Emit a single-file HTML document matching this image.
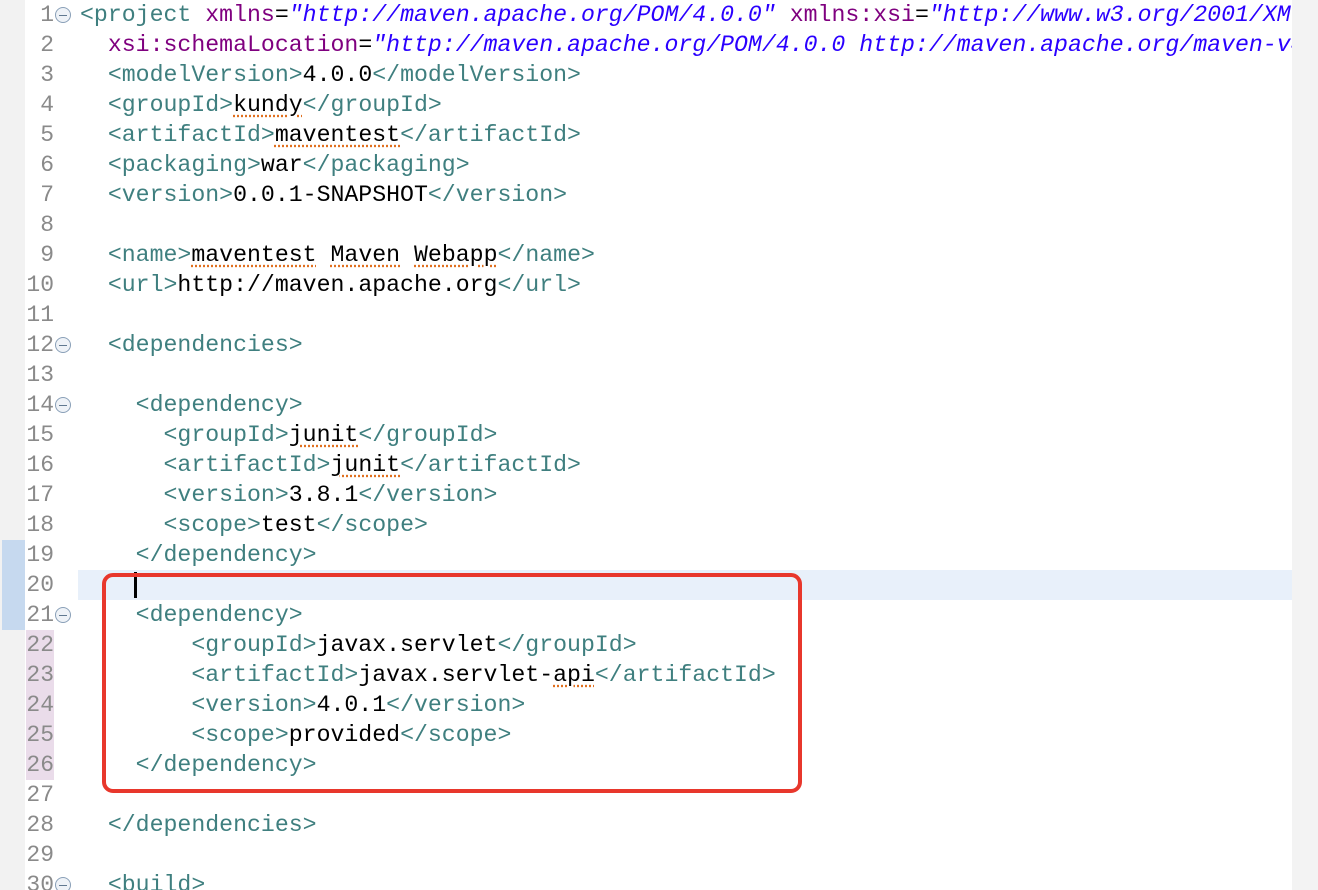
<!DOCTYPE html>
<html><head><meta charset="utf-8"><style>
html,body{margin:0;padding:0;background:#fff;width:1318px;height:890px;overflow:hidden;position:relative;font-family:"Liberation Mono",monospace;}
.ls{position:absolute;left:0;top:0;width:25px;height:890px;background:#f2f2f2;}
.gut{position:absolute;left:25px;top:0;width:48px;height:890px;background:#fff;}
.sb{position:absolute;left:1292px;top:0;width:26px;height:890px;background:#f3f3f3;}
.blue{position:absolute;left:2px;top:540px;width:23px;height:90px;background:#c6d9ef;}
.purp{position:absolute;left:26px;top:630px;width:28px;height:150px;background:#eadcea;}
.cur{position:absolute;left:78px;top:570px;width:1214px;height:30px;background:#e8f0fa;}
.nums{position:absolute;left:18px;top:0;width:36px;text-align:right;font-size:23px;line-height:30px;color:#8a8a8a;}
.code{position:absolute;left:80px;top:0;font-size:23.2px;line-height:30px;white-space:pre;color:#000;width:1212px;overflow:hidden;}
.t{color:#3f7f7f}.a{color:#7f007f}.s{color:#2a00ff;font-style:italic}
.u{text-decoration:underline dotted #e07020;text-underline-offset:4px}
.fold{position:absolute;left:55px;width:16px;height:16px;border-radius:50%;border:1px solid #8aa0b8;background:#eef2f7;box-sizing:border-box;}
.fold::after{content:"";position:absolute;left:3px;top:6.5px;width:8px;height:1.5px;background:#607890;}
.box{position:absolute;left:102px;top:573px;width:700px;height:220px;border:4px solid #e8372c;border-radius:11px;box-sizing:border-box;}
.caret{position:absolute;left:134px;top:572px;width:3px;height:26px;background:#000;}
</style></head><body>
<div class="ls"></div><div class="blue"></div>
<div class="gut"></div><div class="purp"></div>
<div class="sb"></div>
<div class="cur"></div>
<div class="nums">1<br>2<br>3<br>4<br>5<br>6<br>7<br>8<br>9<br>10<br>11<br>12<br>13<br>14<br>15<br>16<br>17<br>18<br>19<br>20<br>21<br>22<br>23<br>24<br>25<br>26<br>27<br>28<br>29<br>30</div>
<div class="fold" style="top:7px"></div>
<div class="fold" style="top:337px"></div>
<div class="fold" style="top:397px"></div>
<div class="fold" style="top:607px"></div>
<div class="fold" style="top:877px"></div>
<div class="code"><span class="t">&lt;project</span> <span class="a">xmlns</span>=<span class="s">"http://maven.apache.org/POM/4.0.0"</span> <span class="a">xmlns:xsi</span>=<span class="s">"http://www.w3.org/2001/XMLSchema-instance"</span>
  <span class="a">xsi:schemaLocation</span>=<span class="s">"http://maven.apache.org/POM/4.0.0 http://maven.apache.org/maven-v4_0_0.xsd"</span><span class="t">&gt;</span>
  <span class="t">&lt;modelVersion&gt;</span>4.0.0<span class="t">&lt;/modelVersion&gt;</span>
  <span class="t">&lt;groupId&gt;</span><span class="u">kundy</span><span class="t">&lt;/groupId&gt;</span>
  <span class="t">&lt;artifactId&gt;</span><span class="u">maventest</span><span class="t">&lt;/artifactId&gt;</span>
  <span class="t">&lt;packaging&gt;</span>war<span class="t">&lt;/packaging&gt;</span>
  <span class="t">&lt;version&gt;</span>0.0.1-SNAPSHOT<span class="t">&lt;/version&gt;</span>

  <span class="t">&lt;name&gt;</span><span class="u">maventest</span> <span class="u">Maven</span> <span class="u">Webapp</span><span class="t">&lt;/name&gt;</span>
  <span class="t">&lt;url&gt;</span>http://maven.apache.org<span class="t">&lt;/url&gt;</span>

  <span class="t">&lt;dependencies&gt;</span>

    <span class="t">&lt;dependency&gt;</span>
      <span class="t">&lt;groupId&gt;</span><span class="u">junit</span><span class="t">&lt;/groupId&gt;</span>
      <span class="t">&lt;artifactId&gt;</span><span class="u">junit</span><span class="t">&lt;/artifactId&gt;</span>
      <span class="t">&lt;version&gt;</span>3.8.1<span class="t">&lt;/version&gt;</span>
      <span class="t">&lt;scope&gt;</span>test<span class="t">&lt;/scope&gt;</span>
    <span class="t">&lt;/dependency&gt;</span>

    <span class="t">&lt;dependency&gt;</span>
        <span class="t">&lt;groupId&gt;</span>javax.servlet<span class="t">&lt;/groupId&gt;</span>
        <span class="t">&lt;artifactId&gt;</span>javax.servlet-<span class="u">api</span><span class="t">&lt;/artifactId&gt;</span>
        <span class="t">&lt;version&gt;</span>4.0.1<span class="t">&lt;/version&gt;</span>
        <span class="t">&lt;scope&gt;</span>provided<span class="t">&lt;/scope&gt;</span>
    <span class="t">&lt;/dependency&gt;</span>

  <span class="t">&lt;/dependencies&gt;</span>

  <span class="t">&lt;build&gt;</span></div>
<div class="caret"></div>
<div class="box"></div>
</body></html>
